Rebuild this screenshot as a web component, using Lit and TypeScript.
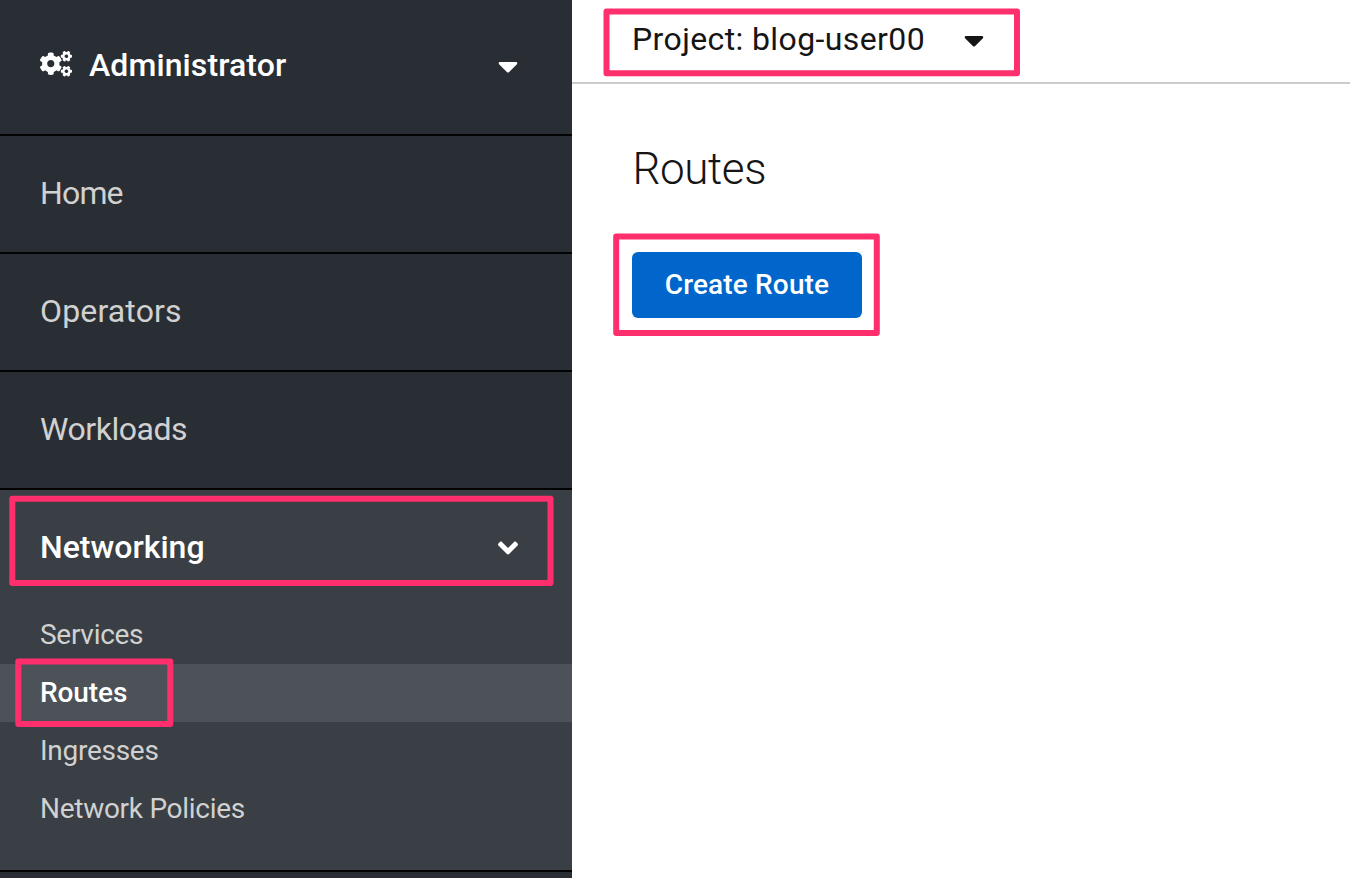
import { LitElement, html, css, svg } from "lit";
import { customElement } from "lit/decorators.js";

const GEAR_LARGE =
  "M386.3 286.1l33.7 16.8c10.1 5.8 14.5 18.1 10.5 29.1-8.9 24.2-26.4 46.4-42.6 65.8-7.4 8.9-20.2 11.1-30.3 5.3l-29.1-16.8c-16 13.7-34.6 24.6-54.9 31.7v33.6c0 11.6-8.3 21.6-19.7 23.6-24.6 4.2-50.4 4.4-75.9 0-11.5-2-20-11.9-20-23.6V418c-20.3-7.2-38.9-18-54.9-31.7L74 403c-10 5.8-22.9 3.6-30.3-5.3-16.2-19.4-33.3-41.6-42.2-65.7-4-10.9.4-23.2 10.5-29.1l33.3-16.8c-3.9-20.9-3.9-42.4 0-63.4L12 205.8c-10.1-5.8-14.6-18.1-10.5-29 8.9-24.2 26-46.4 42.2-65.8 7.4-8.9 20.2-11.1 30.3-5.3l29.1 16.8c16-13.7 34.6-24.6 54.9-31.7V57.1c0-11.5 8.2-21.5 19.6-23.5 24.6-4.2 50.5-4.4 76-.1 11.5 2 20 11.9 20 23.6v33.6c20.3 7.2 38.9 18 54.9 31.7l29.1-16.8c10-5.8 22.9-3.6 30.3 5.3 16.2 19.4 33.2 41.6 42.1 65.8 4 10.9.1 23.2-10 29.1l-33.7 16.8c3.9 21 3.9 42.5 0 63.5zm-117.6 21.1c59.2-77-28.7-164.9-105.7-105.7-59.2 77 28.7 164.9 105.7 105.7z";
const GEAR_SMALL =
  "M512.1 191l-8.2 14.3c-3 5.3-9.4 7.5-15.1 5.4-11.8-4.4-22.6-10.7-32.1-18.6-4.6-3.8-5.8-10.5-2.8-15.7l8.2-14.3c-6.9-8-12.3-17.3-15.9-27.4h-16.5c-6 0-11.2-4.3-12.2-10.3-2-12-2.1-24.6 0-37.1 1-6 6.2-10.4 12.2-10.4h16.5c3.6-10.1 9-19.4 15.9-27.4l-8.2-14.3c-3-5.2-1.9-11.9 2.8-15.7 9.5-7.9 20.4-14.2 32.1-18.6 5.7-2.1 12.1.1 15.1 5.4l8.2 14.3c10.5-1.9 21.2-1.9 31.7 0L552 6.3c3-5.3 9.4-7.5 15.1-5.4 11.8 4.4 22.6 10.7 32.1 18.6 4.6 3.8 5.8 10.5 2.8 15.7l-8.2 14.3c6.9 8 12.3 17.3 15.9 27.4h16.5c6 0 11.2 4.3 12.2 10.3 2 12 2.1 24.6 0 37.1-1 6-6.2 10.4-12.2 10.4h-16.5c-3.6 10.1-9 19.4-15.9 27.4l8.2 14.3c3 5.2 1.9 11.9-2.8 15.7-9.5 7.9-20.4 14.2-32.1 18.6-5.7 2.1-12.1-.1-15.1-5.4l-8.2-14.3c-10.4 1.9-21.2 1.9-31.7 0zm-10.5-58.8c38.5 29.6 82.4-14.3 52.8-52.8-38.5-29.7-82.4 14.3-52.8 52.8z";
const CARET =
  "M31.3 192h257.3c17.8 0 26.7 21.5 14.1 34.1L174.1 354.8c-7.8 7.8-20.5 7.8-28.3 0L17.2 226.1C4.6 213.5 13.5 192 31.3 192z";
const ANGLE =
  "M143 352.3L7 216.3c-9.4-9.4-9.4-24.6 0-33.9l22.6-22.6c9.4-9.4 24.6-9.4 33.9 0l96.4 96.4 96.4-96.4c9.4-9.4 24.6-9.4 33.9 0l22.6 22.6c9.4 9.4 9.4 24.6 0 33.9l-136 136c-9.2 9.4-24.4 9.4-33.8 0z";

const arrow = (d: string) =>
  html`<svg class="arrow" viewBox="0 0 320 512"><path d=${d} /></svg>`;

/* Callout frames drawn over the page: outer x, y, width, height. */
const FRAMES = [
  [603.5, 8.6, 416.5, 67.6],
  [613.2, 233.4, 266.6, 102.6],
  [9.3, 495.8, 544.2, 90.2],
  [15.3, 658.5, 158, 68.6],
];

@customElement("app-root")
export class AppRoot extends LitElement {
  static styles = css`
    :host {
      display: flex;
      position: relative;
      width: 1350px;
      height: 878px;
      overflow: hidden;
      background: #fff;
      color: #151515;
      font-family: Roboto, "Liberation Sans", sans-serif;
      font-size: 32px;
    }
    svg {
      display: block;
      fill: currentColor;
    }
    .arrow {
      flex: none;
      width: 20px;
      height: 32px;
    }
    .sidebar {
      width: 572px;
      flex: none;
      box-sizing: border-box;
      background: #292e34;
      color: #d1d1d1;
    }
    .switcher,
    .item {
      display: flex;
      align-items: center;
      box-sizing: border-box;
      padding: 0 54px 0 40px;
      border-bottom: 2px solid #030303;
      height: 118px;
    }
    .switcher {
      height: 136px;
      padding-bottom: 2px;
      color: #fff;
      font-weight: 500;
    }
    .switcher .label {
      margin-left: 17px;
      padding-bottom: 2px;
      flex: 1;
      letter-spacing: 0.1px;
    }
    .cogs {
      width: 32px;
      height: 25.6px;
      margin-top: -4px;
    }
    .item .label {
      flex: 1;
      padding-bottom: 2px;
    }
    .home {
      letter-spacing: -0.85px;
    }
    .operators {
      letter-spacing: 0.15px;
    }
    .workloads {
      letter-spacing: -0.45px;
    }
    .section {
      background: #3a3f45;
      border-bottom: 2px solid #030303;
      height: 380px;
    }
    .section .item {
      border: 0;
      height: 116px;
      color: #fff;
      font-weight: 500;
    }
    .sub {
      height: 58px;
      line-height: 57px;
      padding-left: 40px;
      font-size: 28px;
      letter-spacing: -0.28px;
    }
    .sub.current {
      background: #4d5258;
      color: #fff;
      font-weight: 500;
      letter-spacing: -0.1px;
    }
    .label,
    .text {
      white-space: nowrap;
    }
    .main {
      flex: 1;
    }
    .project {
      display: flex;
      align-items: center;
      height: 84px;
      padding: 0 0 2px 60px;
      box-sizing: border-box;
      border-bottom: 2px solid #ccc;
    }
    .project .text {
      width: 332px;
      padding-bottom: 2px;
      letter-spacing: 0.39px;
    }
    .content {
      padding: 56px 60px;
    }
    h1 {
      margin: 0;
      font-size: 44px;
      line-height: 58px;
      font-weight: 300;
      letter-spacing: -0.4px;
      text-indent: 0.5px;
    }
    .create {
      display: flex;
      align-items: center;
      justify-content: center;
      width: 230px;
      height: 66px;
      margin-top: 54px;
      padding: 0 0 2px;
      border: 0;
      border-radius: 6px;
      background: #06c;
      color: #fff;
      font: 500 28px Roboto, "Liberation Sans", sans-serif;
      letter-spacing: 0.15px;
    }
    .frames {
      position: absolute;
      inset: 0;
      width: 1350px;
      height: 878px;
      pointer-events: none;
    }
    .frames rect {
      fill: none;
      stroke: #ff2e6c;
      stroke-width: 6;
    }
  `;

  render() {
    return html`
      <nav class="sidebar">
        <div class="switcher">
          <svg class="cogs" viewBox="0 0 640 512">
            <path d=${GEAR_LARGE} />
            <path d=${GEAR_SMALL} />
            <path d=${GEAR_SMALL} transform="translate(0 299)" />
          </svg>
          <span class="label">Administrator</span>
          ${arrow(CARET)}
        </div>
        <div class="item"><span class="label home">Home</span></div>
        <div class="item"><span class="label operators">Operators</span></div>
        <div class="item"><span class="label workloads">Workloads</span></div>
        <div class="section">
          <div class="item">
            <span class="label">Networking</span>${arrow(ANGLE)}
          </div>
          <div class="sub">Services</div>
          <div class="sub current">Routes</div>
          <div class="sub">Ingresses</div>
          <div class="sub">Network Policies</div>
        </div>
      </nav>
      <main class="main">
        <div class="project">
          <span class="text">Project: blog-user00</span>${arrow(CARET)}
        </div>
        <div class="content">
          <h1>Routes</h1>
          <button class="create">Create Route</button>
        </div>
      </main>
      <svg class="frames" viewBox="0 0 1350 878">
        ${FRAMES.map(
          ([x, y, w, h]) =>
            svg`<rect x=${x + 3} y=${y + 3} width=${w - 6} height=${h - 6} stroke-linejoin="round" />`
        )}
      </svg>
    `;
  }
}
